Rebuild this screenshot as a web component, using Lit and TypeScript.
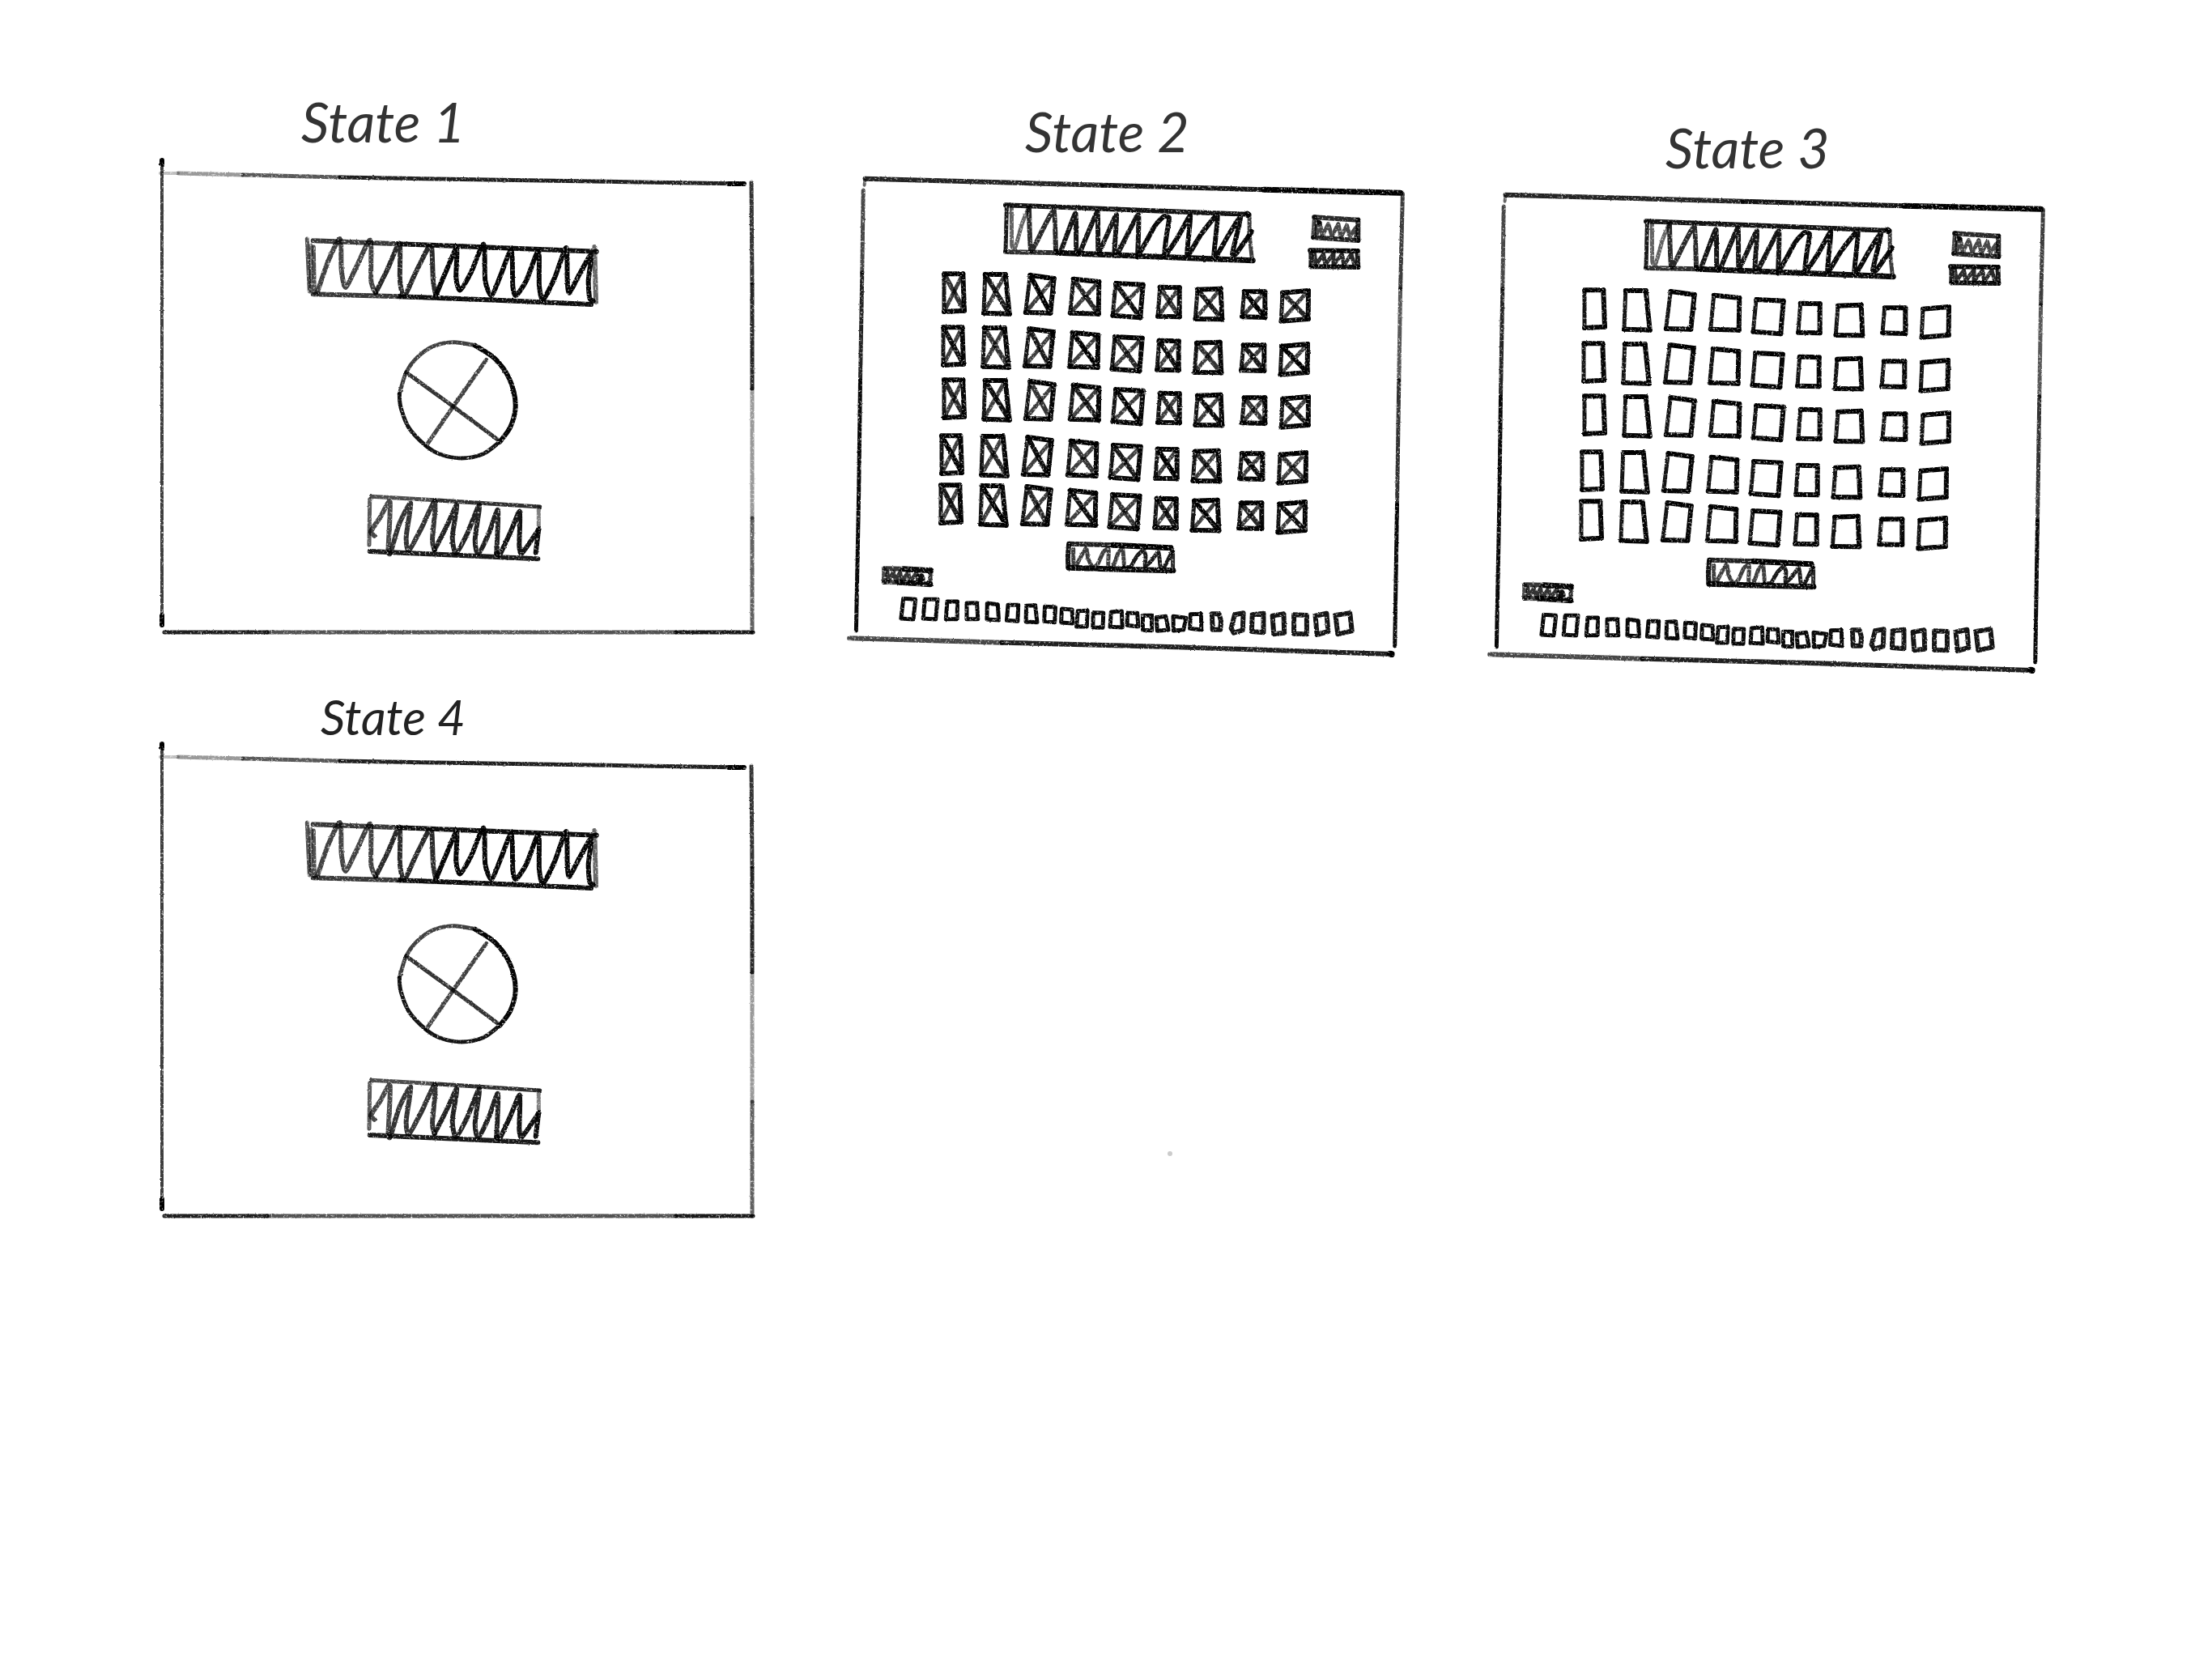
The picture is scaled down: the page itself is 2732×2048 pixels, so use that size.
import { LitElement, html, svg, css } from "lit";
import { customElement, property } from "lit/decorators.js";

type Pt = [number, number];
interface Space { x: number; y: number; sx: number; sy: number; }

/* Drawing spaces: an origin on the canvas and a number of units per pixel. */
const BANNER: Space = { x: 360, y: 280, sx: 3, sy: 3 };
const DIAL: Space = { x: 430, y: 400, sx: 3, sy: 3 };
const UPPER: Space = { x: 1040, y: 110, sx: 2.178, sy: 3 };
const LOWER: Space = { x: 1040, y: 440, sx: 2.178, sy: 3 };
const CELLS: Space = { x: 1140, y: 320, sx: 3, sy: 3 };
const STRIP: Space = { x: 1090, y: 650, sx: 2.529, sy: 3 };
const PAGE: Space = { x: 0, y: 0, sx: 1, sy: 1 };

const parse = (s: string, sp: Space): Pt[] =>
  s.trim().split(/\s+/).map((p) => {
    const [x, y] = p.split(",").map(Number);
    return [sp.x + x / sp.sx, sp.y + y / sp.sy] as Pt;
  });

const fmt = (p: Pt) => `${p[0].toFixed(1)} ${p[1].toFixed(1)}`;

/* Curve through all the points; bend 0 gives straight segments. */
const curve = (pts: Pt[], bend: number): string => {
  let d = `M${fmt(pts[0])}`;
  for (let i = 0; i < pts.length - 1; i++) {
    const a = pts[i - 1] ?? pts[i];
    const b = pts[i];
    const c = pts[i + 1];
    const e = pts[i + 2] ?? c;
    const p: Pt = [b[0] + (c[0] - a[0]) * bend, b[1] + (c[1] - a[1]) * bend];
    const q: Pt = [c[0] - (e[0] - b[0]) * bend, c[1] - (e[1] - b[1]) * bend];
    d += `C${fmt(p)} ${fmt(q)} ${fmt(c)}`;
  }
  return d;
};

const line = (sp: Space, s: string, width = 5, ink = 0.85, bend = 0) =>
  svg`<path d=${curve(parse(s, sp), bend)} stroke-width=${width} stroke-opacity=${ink}></path>`;

const BANNER_ZIGZAG_A = "95,245 135,130 180,45 185,160 200,225 240,150 292,50 295,200 312,245";
const BANNER_ZIGZAG_B = "312,245 355,160 400,62 402,200 418,258 460,170 508,76 520,80 525,200 535,255";
const BANNER_ZIGZAG_C = "535,255 575,160 612,80 610,190 625,235 665,170 712,65 718,200 742,255 775,180 815,85 820,220 832,255 870,200 915,90 918,220 932,270 975,190 1018,78 1022,200 1030,245 1065,180 1110,105 1100,200 1105,265 1118,275";

const welcome = () => svg`
  ${line(PAGE, "200,198 200,480 200,771", 4, 0.76)}
  ${line(PAGE, "200,198 200,203", 6, 1)}
  ${line(PAGE, "200,760 200,772", 6, 1)}
  ${line(PAGE, "198,214 220,214", 4, 0.25)}
  ${line(PAGE, "220,214 300,216", 5, 0.4)}
  ${line(PAGE, "300,216 420,219", 5, 0.65)}
  ${line(PAGE, "420,219 919,227", 5, 0.88)}
  ${line(PAGE, "900,227 919,227", 6, 1)}
  ${line(PAGE, "928,225 929,350", 5, 0.8)}
  ${line(PAGE, "929,350 929,480", 5, 0.85)}
  ${line(PAGE, "929,480 929,640", 5, 0.4)}
  ${line(PAGE, "929,640 929,781", 5, 0.62)}
  ${line(PAGE, "203,781 330,781", 5, 0.88)}
  ${line(PAGE, "330,781 835,781", 5, 0.68)}
  ${line(PAGE, "835,781 930,781", 5, 0.9)}

  ${line(BANNER, "58,45 62,140 67,240", 5, 0.68)}
  ${line(BANNER, "72,70 72,235", 5, 0.55)}
  ${line(BANNER, "82,75 85,245", 5, 0.68)}
  ${line(BANNER, "80,52 400,64", 6, 0.78)}
  ${line(BANNER, "400,64 1130,92", 6, 0.95)}
  ${line(BANNER, "80,250 400,259", 6, 0.78)}
  ${line(BANNER, "400,259 760,272 1110,288", 6, 0.95)}
  ${line(BANNER, "1123,75 1128,280", 6, 0.6)}
  ${line(BANNER, BANNER_ZIGZAG_A, 6, 0.74, 0.12)}
  ${line(BANNER, BANNER_ZIGZAG_B, 6, 0.84, 0.12)}
  ${line(BANNER, BANNER_ZIGZAG_C, 6, 0.98, 0.12)}

  ${line(DIAL, "470,80 545,130 598,205 620,300 602,380 562,437", 6, 0.98, 0.16)}
  ${line(DIAL, "562,437 500,482 420,498 340,483 288,452 225,385 195,310 190,260", 5, 0.92, 0.16)}
  ${line(DIAL, "190,260 215,180 255,125 315,83 390,68 470,80", 5, 0.75, 0.16)}
  ${line(DIAL, "215,180 390,307 562,435", 5, 0.8)}
  ${line(DIAL, "512,133 390,305 290,450", 5, 0.74)}

  ${line(DIAL, "85,640 320,653", 5, 0.7)}
  ${line(DIAL, "320,653 710,678", 5, 0.82)}
  ${line(DIAL, "80,650 78,820", 5, 0.65)}
  ${line(DIAL, "80,843 703,871", 6, 0.9)}
  ${line(DIAL, "706,680 706,760", 5, 0.5)}
  ${line(DIAL, "706,760 695,848", 6, 0.95)}
  ${line(DIAL, "97,785 84,770 120,715 155,660 148,845", 6, 0.72, 0.1)}
  ${line(DIAL, "148,845 157,848 190,740 232,665 215,790 225,840 270,760 322,658 312,800 320,838", 6, 0.8, 0.12)}
  ${line(DIAL, "320,838 365,750 403,672 386,790 400,850 440,780 486,672 470,800 482,852 520,780 555,690 550,850", 6, 0.87, 0.12)}
  ${line(DIAL, "550,850 562,855 600,775 636,695 634,820 644,850 706,762", 6, 0.93, 0.1)}
`;

const COLUMNS = [
  "78,55 148,55 153,191 78,195",
  "230,57 305,57 320,203 225,200",
  "397,60 485,72 472,200 380,198",
  "557,74 652,84 650,203 545,200",
  "714,90 815,95 805,217 703,209",
  "878,104 950,106 950,214 870,212",
  "1017,113 1103,110 1108,223 1009,222",
  "1190,121 1267,121 1267,216 1182,214",
  "1332,125 1428,117 1427,222 1327,230",
];
const ROWS: Pt[] = [[0, 0], [-3, 198], [0, 393], [-9, 600], [-12, 783]];

const KEYS = [
  "65,268 103,271 96,345 58,342", "132,271 172,271 166,345 127,342",
  "202,279 234,279 233,344 198,344", "263,285 295,284 298,344 263,344",
  "327,285 360,290 363,348 326,345", "392,292 424,292 422,352 388,349",
  "449,295 477,293 483,356 448,354", "507,298 540,300 538,356 505,352",
  "560,306 592,309 594,360 558,357", "610,314 640,313 638,372 606,372",
  "658,320 690,321 688,376 657,375", "714,318 747,315 749,375 711,373",
  "765,321 796,322 799,372 764,367", "813,331 841,331 841,386 813,385",
  "855,338 885,334 893,384 858,388", "908,334 948,340 940,384 909,387",
  "962,326 995,325 996,384 960,379", "1029,325 1051,325 1057,350 1055,383 1031,383",
  "1100,328 1127,322 1125,385 1097,395 1089,378", "1155,328 1190,323 1190,394 1153,390",
  "1218,332 1253,325 1255,395 1222,400", "1285,328 1325,330 1325,400 1285,398",
  "1352,332 1387,323 1392,390 1357,402", "1415,330 1460,322 1466,388 1422,400",
];

const cell = (shape: string, shift: Pt, index: number, crossed: boolean) => {
  const space = { ...CELLS, x: CELLS.x + shift[0] / 3, y: CELLS.y + shift[1] / 3 };
  const [a, b, c, d] = shape.split(" ");
  const bold = 0.8 + ((index * 7) % 5) * 0.05;
  return svg`
    ${line(space, `${a} ${b}`, 6, 1)}
    ${line(space, `${b} ${c}`, 6, 0.98)}
    ${line(space, `${c} ${d}`, 6, 0.98)}
    ${line(space, `${d} ${a}`, 5, 0.92)}
    ${crossed ? svg`${line(space, `${a} ${c}`, 6, bold)}${line(space, `${b} ${d}`, 5, 0.76)}` : null}
  `;
};

const board = (crossed: boolean) => svg`
  ${line(UPPER, "62,332 700,356", 6, 0.86)}
  ${line(UPPER, "700,356 1135,373", 6, 0.92)}
  ${line(UPPER, "1135,373 1502,385", 7, 1)}
  ${line(UPPER, "62,338 60,356", 4, 0.6)}
  ${line(UPPER, "57,375 54,680", 5, 0.72)}
  ${line(UPPER, "54,680 49,1080", 5, 0.86)}
  ${line(LOWER, "49,90 45,500 38,1017", 5, 0.97)}
  ${line(UPPER, "1508,387 1502,740", 5, 0.76)}
  ${line(UPPER, "1502,740 1498,1080", 5, 0.66)}
  ${line(LOWER, "1498,90 1493,550", 5, 0.8)}
  ${line(LOWER, "1493,550 1487,1074", 5, 0.97)}
  ${line(LOWER, "20,1045 430,1061", 6, 0.72)}
  ${line(LOWER, "430,1061 900,1078 1478,1104", 6, 0.88)}
  ${line(LOWER, "1474,1103 1478,1104", 8, 1)}

  ${line(UPPER, "440,430 1090,464", 6, 0.93)}
  ${line(UPPER, "1090,464 1091,465", 8, 1)}
  ${line(UPPER, "443,432 440,603", 5, 0.9)}
  ${line(UPPER, "440,603 580,607", 6, 0.82)}
  ${line(UPPER, "580,607 1105,635", 7, 0.97)}
  ${line(UPPER, "1096,465 1096,540 1103,632", 5, 0.76)}
  ${line(UPPER, "456,440 457,580 467,583 484,500 503,437", 5, 0.62, 0.08)}
  ${line(UPPER, "503,437 508,600 540,520 570,450 575,600", 6, 0.84, 0.08)}
  ${line(UPPER, "575,600 587,605 628,460 630,600 640,605 687,455 690,606 738,465 733,600 745,600 797,465 795,622", 6, 0.92, 0.06)}
  ${line(UPPER, "795,622 820,560 845,500 866,472 880,478 872,550 868,620 905,545 937,470 928,618 965,540 1010,468 1000,630 1040,540 1072,475 1050,610 1060,610 1102,528", 6, 0.97, 0.08)}

  ${line(UPPER, "1270,475 1388,485", 6, 0.84)}
  ${line(UPPER, "1272,475 1268,549", 6, 0.72)}
  ${line(UPPER, "1268,550 1388,561", 6, 0.86)}
  ${line(UPPER, "1388,485 1388,560", 6, 0.86)}
  ${line(UPPER, "1277,490 1277,540 1285,495 1292,543 1308,500 1318,545 1335,500 1342,548 1358,505 1366,545 1383,512 1382,550", 5, 0.72)}
  ${line(UPPER, "1282,494 1284,496", 6, 0.9)}

  ${line(UPPER, "1259,598 1387,600", 6, 0.98)}
  ${line(UPPER, "1262,600 1262,658", 6, 0.88)}
  ${line(UPPER, "1262,658 1388,660", 6, 0.95)}
  ${line(UPPER, "1386,600 1388,660", 6, 0.9)}
  ${line(UPPER, "1271,612 1275,650 1295,612 1300,650 1322,610 1322,652 1345,612 1350,652 1370,612 1378,650", 5, 0.84)}

  ${ROWS.map((shift, r) => COLUMNS.map((shape, c) => cell(shape, shift, r * 9 + c, crossed)))}

  ${line(STRIP, "584,65 720,70", 6, 0.88)}
  ${line(STRIP, "720,70 900,80", 7, 1)}
  ${line(STRIP, "582,65 579,110 580,152", 6, 0.92)}
  ${line(STRIP, "582,154 720,159 908,164", 7, 0.97)}
  ${line(STRIP, "907,88 907,164", 5, 0.84)}
  ${line(STRIP, "596,85 597,150 603,150 635,82 642,120 657,152 672,140 690,95 706,85 705,150 720,150 736,100 750,85 755,150", 5, 0.76, 0.1)}
  ${line(STRIP, "755,150 775,150 795,110 814,90 822,110 820,150 842,125 862,95 868,150 880,150 905,92", 5, 0.9, 0.1)}

  ${line(LOWER, "114,787 165,788", 6, 0.78)}
  ${line(LOWER, "165,788 239,794", 7, 0.97)}
  ${line(LOWER, "114,788 113,837", 6, 0.72)}
  ${line(LOWER, "114,837 155,838", 6, 0.76)}
  ${line(LOWER, "155,838 237,845", 7, 0.97)}
  ${line(LOWER, "238,796 237,843", 5, 0.82)}
  ${line(LOWER, "122,800 124,834 138,800 146,835 156,798 160,838 178,800 182,838 200,802 205,836", 5, 0.8)}
  ${line(LOWER, "205,815 215,812 218,826 210,828", 5, 0.95)}

  ${KEYS.map((k, i) => line(STRIP, `${k} ${k.split(" ")[0]}`, i > 16 ? 6 : 5, i > 16 ? 0.92 : 0.97))}
`;

@customElement("state-sketch")
export class StateSketch extends LitElement {
  @property() kind: "welcome" | "board" | "cleared" = "welcome";

  static styles = css`
    :host { display: block; }
    .sheet { display: block; width: 100%; height: auto; overflow: visible; }
    .ink { fill: none; stroke: #000; stroke-linecap: round; stroke-linejoin: round; }
  `;

  render() {
    const welcomeScreen = this.kind === "welcome";
    const box = welcomeScreen ? "190 190 759 600" : "1040 210 700 610";
    return html`
      <svg class="sheet" viewBox=${box} aria-hidden="true">
        <filter id="pencil" x="-5%" y="-5%" width="110%" height="110%" color-interpolation-filters="sRGB">
          <feTurbulence type="fractalNoise" baseFrequency="0.4" numOctaves="2" seed="4" result="noise"></feTurbulence>
          <feDisplacementMap in="SourceGraphic" in2="noise" scale="2" xChannelSelector="R" yChannelSelector="G" result="rough"></feDisplacementMap>
          <feColorMatrix in="noise" type="matrix" values="0 0 0 0 0  0 0 0 0 0  0 0 0 0 0  0 0 3 0 -0.3" result="grain"></feColorMatrix>
          <feComposite in="rough" in2="grain" operator="in"></feComposite>
        </filter>
        <g class="ink" filter="url(#pencil)">
          ${welcomeScreen ? welcome() : board(this.kind === "board")}
        </g>
      </svg>
    `;
  }
}

@customElement("app-root")
export class AppRoot extends LitElement {
  static styles = css`
    :host { display: block; min-height: 100vh; background: #fff; }
    .storyboard {
      position: relative;
      box-sizing: border-box;
      min-height: 100vh;
      padding: 0 201px 0 190px;
      display: grid;
      grid-template-columns: 759fr 700fr 700fr;
      column-gap: 91px;
      align-content: start;
      align-items: start;
    }
    .state { margin: 0; }
    .label {
      margin: 0;
      font: italic 400 68px/80px Lato, "Liberation Sans", sans-serif;
      color: #333;
    }
    .first { padding-top: 110px; }
    .second { padding-top: 122px; }
    .third { padding-top: 142px; }
    .fourth { padding-top: 19px; }
    .second .label, .third .label { padding: 0 0 8px 226px; }
    .first .label { padding-left: 182px; }
    .fourth .label { padding-left: 206px; font-size: 60px; line-height: 52px; color: #222; }
    .speck {
      position: absolute;
      left: 1442px;
      top: 1422px;
      width: 6px;
      height: 6px;
      border-radius: 50%;
      background: #ccc;
    }
  `;

  render() {
    return html`
      <main class="storyboard">
        <section class="state first">
          <h2 class="label">State 1</h2>
          <state-sketch kind="welcome"></state-sketch>
        </section>
        <section class="state second">
          <h2 class="label">State 2</h2>
          <state-sketch kind="board"></state-sketch>
        </section>
        <section class="state third">
          <h2 class="label">State 3</h2>
          <state-sketch kind="cleared"></state-sketch>
        </section>
        <section class="state fourth">
          <h2 class="label">State 4</h2>
          <state-sketch kind="welcome"></state-sketch>
        </section>
        <span class="speck"></span>
      </main>
    `;
  }
}
